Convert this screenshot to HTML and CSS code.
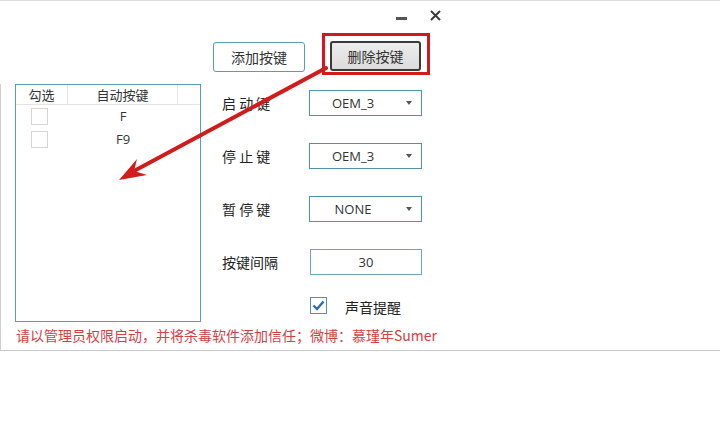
FILE: index.html
```html
<!DOCTYPE html>
<html lang="zh-CN">
<head>
<meta charset="utf-8">
<title>自动按键</title>
<link rel="stylesheet" href="styles.css">
</head>
<body>
<div class="window">
  <div class="titlebar">
    <span class="min"></span>
    <svg class="close" width="11" height="11" viewBox="0 0 11 11"><path d="M1 1L10 10M10 1L1 10" stroke="#3c3c3c" stroke-width="2"/></svg>
  </div>
  <div class="toolbar">
    <button class="btn add">添加按键</button>
    <div class="highlight"><button class="btn del">删除按键</button></div>
  </div>
  <div class="content">
    <div class="main">
      <div class="list">
        <div class="list-head">
          <div class="col c1">勾选</div>
          <div class="col c2">自动按键</div>
          <div class="col c3"></div>
        </div>
        <div class="list-row"><span class="cb"></span><span class="key">F</span></div>
        <div class="list-row"><span class="cb"></span><span class="key">F9</span></div>
      </div>
      <div class="form">
        <div class="frow"><span class="label">启 动 键</span><div class="select"><span class="val">OEM_3</span><span class="caret"></span></div></div>
        <div class="frow"><span class="label">停 止 键</span><div class="select"><span class="val">OEM_3</span><span class="caret"></span></div></div>
        <div class="frow"><span class="label">暂 停 键</span><div class="select"><span class="val">NONE</span><span class="caret"></span></div></div>
        <div class="frow"><span class="label">按键间隔</span><div class="input">30</div></div>
        <div class="crow">
          <span class="check"><svg width="13" height="11" viewBox="0 0 13 11"><path d="M1.5 5.5L5 9L11.5 1.5" fill="none" stroke="#2b6cb3" stroke-width="2.4"/></svg></span>
          <span class="ctext">声音提醒</span>
        </div>
      </div>
    </div>
    <p class="notice">请以管理员权限启动，并将杀毒软件添加信任；微博：慕瑾年Sumer</p>
  </div>
  <svg class="arrow" width="720" height="432" viewBox="0 0 720 432">
    <line x1="326" y1="68" x2="134" y2="171" stroke="#d21c1c" stroke-width="4" stroke-linecap="round"/>
    <polygon points="119,180 137,159 134,171 147,175" fill="#d21c1c"/>
  </svg>
</div>
</body>
</html>
```
FILE: styles.css
```css
* { box-sizing: border-box; }
html, body { margin: 0; padding: 0; background: #fff; }
body {
  font-family: "Noto Sans CJK SC", "Open Sans", sans-serif;
  color: #222;
  font-size: 14px;
}
.window {
  position: relative;
  width: 720px;
  height: 351px;
  border-top: 1px solid #dcdcdc;
  border-bottom: 1px solid #c9c9c9;
}
.titlebar {
  height: 32px;
  display: flex;
  align-items: flex-start;
  padding-left: 396px;
}
.min {
  display: block;
  width: 11px;
  height: 3px;
  background: #555;
  margin-top: 16px;
}
.close { margin-left: 23px; margin-top: 9px; }
.toolbar {
  height: 51px;
  display: flex;
  align-items: flex-start;
  padding-left: 213px;
}
.btn {
  font-family: "Noto Sans CJK SC", sans-serif;
  font-size: 14px;
  color: #333;
  height: 30px;
  padding: 0;
  line-height: 28px;
  border-radius: 3px;
}
.add {
  width: 92px;
  margin-top: 9px;
  background: #fff;
  border: 1px solid #5a9cb8;
}
.highlight {
  margin-left: 17px;
  border: 3px solid #d2191c;
  padding: 5px 6px 1px 5px;
}
.del {
  width: 91px;
  background: linear-gradient(#ececec, #dcdcdc);
  border: 2px solid #3a3a3a;
  line-height: 26px;
}
.content {
  border-left: 1px solid #cfcfcf;
  height: 267px;
}
.main {
  display: flex;
  align-items: flex-start;
}
.list {
  margin-left: 14px;
  width: 186px;
  height: 238px;
  border: 1px solid #5a9cb5;
}
.list-head {
  display: flex;
  height: 20px;
  border-bottom: 1px solid #e4e4e4;
  font-size: 13px;
  color: #333;
  line-height: 19px;
}
.col { text-align: center; }
.c1 { width: 52px; border-right: 1px solid #e4e4e4; }
.c2 { width: 110px; border-right: 1px solid #e4e4e4; }
.c3 { flex: 1; }
.list-row {
  display: flex;
  align-items: center;
  height: 23px;
}
.cb {
  width: 17px;
  height: 17px;
  border: 1px solid #d6d6d6;
  margin-left: 15px;
  background: #fff;
}
.key {
  width: 110px;
  margin-left: 20px;
  text-align: center;
  font-family: "Open Sans", sans-serif;
  font-size: 13px;
  color: #333;
  margin-top: -2px;
}
.form {
  margin-left: 21px;
  padding-top: 6px;
  display: flex;
  flex-direction: column;
  gap: 27px;
}
.frow {
  display: flex;
  align-items: center;
  height: 26px;
}
.label {
  width: 87px;
  font-size: 14px;
  color: #222;
}
.select, .input {
  width: 113px;
  height: 26px;
  border: 1px solid #4f93ad;
  display: flex;
  align-items: center;
  font-family: "Open Sans", sans-serif;
  font-size: 13px;
  color: #333;
}
.select .val {
  flex: 1;
  text-align: center;
}
.caret {
  width: 0;
  height: 0;
  border-left: 3px solid transparent;
  border-right: 3px solid transparent;
  border-top: 4px solid #555;
  margin-right: 9px;
  margin-left: 10px;
}
.input {
  justify-content: center;
  margin-left: 1px;
  width: 112px;
  border-color: #6aa6bd;
}
.crow {
  display: flex;
  align-items: center;
  height: 17px;
  margin-top: -5px;
  padding-left: 88px;
}
.check {
  width: 17px;
  height: 17px;
  border: 1px solid #4f93ad;
  display: flex;
  align-items: center;
  justify-content: center;
}
.ctext {
  margin-left: 18px;
  font-size: 14px;
  color: #222;
  margin-top: 3px;
}
.notice {
  margin: 3px 0 0 15px;
  font-size: 14px;
  line-height: 20px;
  color: #d6403f;
}
.arrow {
  position: absolute;
  left: 0;
  top: -1px;
  pointer-events: none;
}
```
